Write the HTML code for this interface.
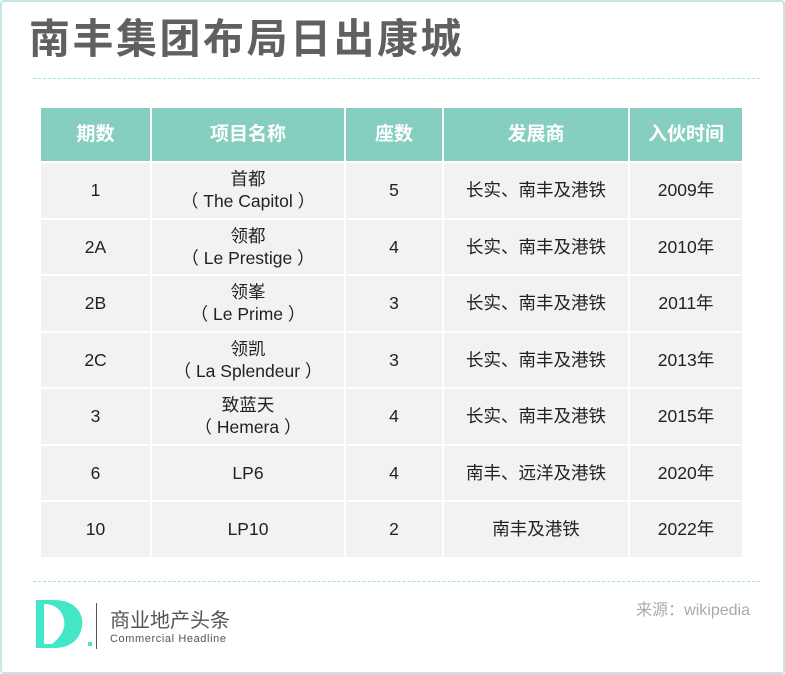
<!DOCTYPE html>
<html><head><meta charset="utf-8"><style>
body{margin:0;width:785px;height:674px;background:#fff;font-family:"Liberation Sans","Noto Sans CJK SC",sans-serif;overflow:hidden}
.frame{position:absolute;left:0;top:0;width:781px;height:670px;border:2px solid #c6e6e6;border-radius:4px}
.title{position:absolute;left:29px;top:13px;font-size:41px;font-weight:bold;color:#606060;letter-spacing:2.5px;line-height:52px}
.dash{position:absolute;left:33px;width:727px;border-top:1px dashed #9fe3dc}
table{position:absolute;left:39px;top:106px;border-collapse:collapse;width:705px}
td,th{border:2px solid #fff;text-align:center;padding:0;font-size:17.5px;color:#222;line-height:22px}
th{background:#86cfc0;color:#fff;height:53px;font-size:19px}
td{background:#f2f2f2;height:54.5px}
.src{position:absolute;right:35px;top:596px;font-size:16px;color:#aaa}
</style></head><body>
<div class="frame"></div>
<div class="title">南丰集团布局日出康城</div>
<div class="dash" style="top:78px"></div>
<table>
<tr><th style="width:109px">期数</th><th style="width:192px">项目名称</th><th style="width:96px">座数</th><th style="width:184px">发展商</th><th>入伙时间</th></tr>
<tr><td>1</td><td>首都<br>（ The Capitol ）</td><td>5</td><td>长实、南丰及港铁</td><td>2009年</td></tr>
<tr><td>2A</td><td>领都<br>（ Le Prestige ）</td><td>4</td><td>长实、南丰及港铁</td><td>2010年</td></tr>
<tr><td>2B</td><td>领峯<br>（ Le Prime ）</td><td>3</td><td>长实、南丰及港铁</td><td>2011年</td></tr>
<tr><td>2C</td><td>领凯<br>（ La Splendeur ）</td><td>3</td><td>长实、南丰及港铁</td><td>2013年</td></tr>
<tr><td>3</td><td>致蓝天<br>（ Hemera ）</td><td>4</td><td>长实、南丰及港铁</td><td>2015年</td></tr>
<tr><td>6</td><td>LP6</td><td>4</td><td>南丰、远洋及港铁</td><td>2020年</td></tr>
<tr><td>10</td><td>LP10</td><td>2</td><td>南丰及港铁</td><td>2022年</td></tr>
</table>
<div class="dash" style="top:581px"></div>
<svg style="position:absolute;left:34px;top:598px" width="60" height="52">
<path d="M2 2 H20 C40 2 50 14 48 28 C46 42 36 50 20 50 H2 Z M10 6 V46 H18 C28 38 34 28 28 16 C24 8 16 6 10 6Z" fill="#43e6c7" fill-rule="evenodd"/>
<rect x="54" y="44" width="4" height="4" fill="#43e6c7"/>
</svg>
<div style="position:absolute;left:96px;top:603px;width:1px;height:46px;background:#555"></div>
<div style="position:absolute;left:110px;top:609px;font-size:20px;color:#555;line-height:24px">商业地产头条</div>
<div style="position:absolute;left:110px;top:633px;font-size:11px;color:#555;letter-spacing:0.6px">Commercial Headline</div>
<div class="src">来源：wikipedia</div>
</body></html>
